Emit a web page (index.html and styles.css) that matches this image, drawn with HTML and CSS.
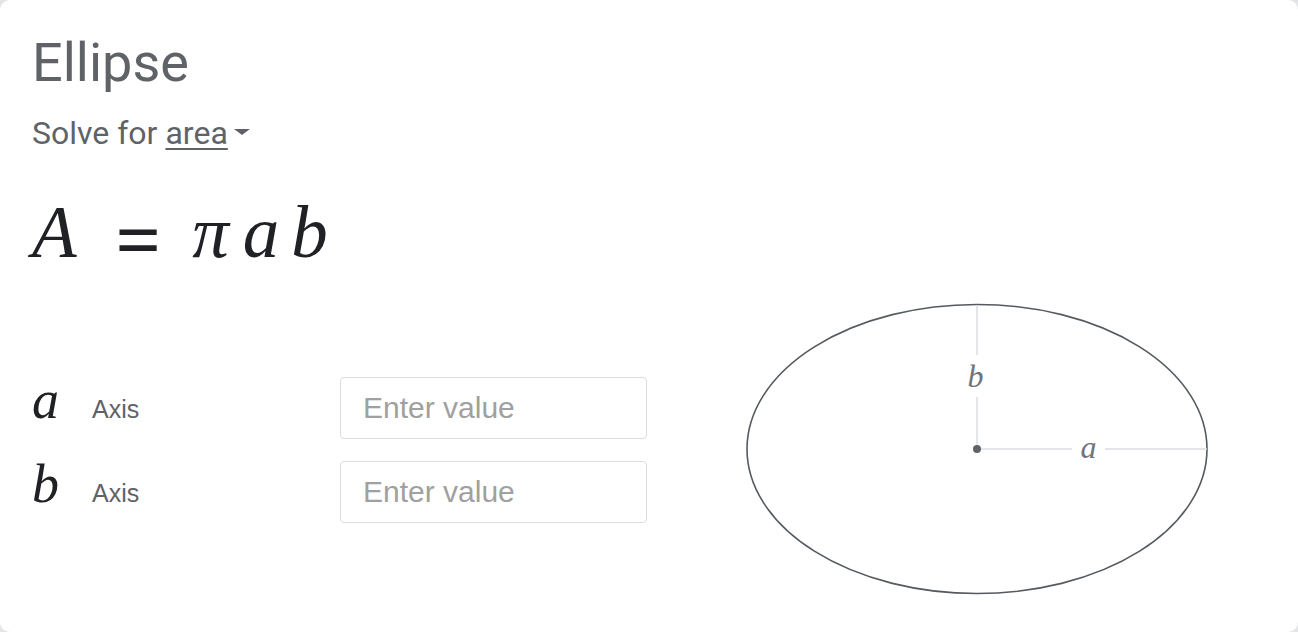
FILE: index.html
```html
<!DOCTYPE html>
<html lang="en">
<head>
<meta charset="utf-8">
<title>Ellipse</title>
<link rel="stylesheet" href="styles.css">
</head>
<body>
<div class="card">
  <h1 class="title">Ellipse</h1>
  <div class="solve">Solve for <span class="solve-target">area</span><span class="caret"></span></div>
  <div class="formula"><span class="f-A">A</span><span class="f-eq">=</span><span class="f-pi">π</span><span class="f-a">a</span><span class="f-b">b</span></div>
  <div class="bottom">
    <div class="form">
      <div class="row">
        <span class="var">a</span>
        <span class="label">Axis</span>
        <input class="field" type="text" placeholder="Enter value">
      </div>
      <div class="row">
        <span class="var">b</span>
        <span class="label">Axis</span>
        <input class="field" type="text" placeholder="Enter value">
      </div>
    </div>
    <svg class="diagram" width="466" height="294" viewBox="0 0 466 294">
      <ellipse cx="232" cy="146" rx="230" ry="144.5" fill="none" stroke="#555a5f" stroke-width="1.6"/>
      <line x1="232" y1="2" x2="232" y2="52" stroke="#dadce0" stroke-width="1.5"/>
      <line x1="232" y1="94" x2="232" y2="146" stroke="#dadce0" stroke-width="1.5"/>
      <line x1="232" y1="146" x2="327" y2="146" stroke="#dadce0" stroke-width="1.5"/>
      <line x1="360" y1="146" x2="462" y2="146" stroke="#dadce0" stroke-width="1.5"/>
      <circle cx="232" cy="146" r="4" fill="#5f6368"/>
      <text class="dlabel" x="230.5" y="84" text-anchor="middle">b</text>
      <text class="dlabel" x="343.5" y="155" text-anchor="middle">a</text>
    </svg>
  </div>
</div>
</body>
</html>
```
FILE: styles.css
```css
html, body {
  margin: 0;
  padding: 0;
  background: #e4e5e7;
}
body {
  width: 1298px;
  height: 632px;
  overflow: hidden;
}
.card {
  box-sizing: border-box;
  width: 1298px;
  height: 632px;
  background: #fff;
  border-radius: 10px;
  padding: 31px 32px 0 32px;
  font-family: Roboto, "Liberation Sans", Arial, sans-serif;
}
.title {
  margin: 0;
  font-size: 54px;
  line-height: 64px;
  font-weight: 400;
  color: #5f6368;
}
.solve {
  margin-top: 18px;
  font-size: 32px;
  line-height: 40px;
  color: #5f6368;
  display: flex;
  align-items: center;
}
.solve-target {
  margin-left: 8px;
  text-decoration: underline;
  text-decoration-thickness: 2px;
  text-underline-offset: 4px;
}
.caret {
  width: 0;
  height: 0;
  margin-left: 6px;
  margin-top: -3px;
  border-left: 8px solid transparent;
  border-right: 8px solid transparent;
  border-top: 6px solid #5f6368;
}
.formula {
  margin-top: 40px;
  height: 80px;
  white-space: nowrap;
  font-family: "Liberation Serif", "Times New Roman", serif;
  font-style: italic;
  font-size: 73px;
  line-height: 80px;
  color: #202124;
}
.formula span {
  display: inline-block;
  vertical-align: baseline;
}
.f-A { margin-right: 39px; }
.formula .f-eq {
  font-style: normal;
  font-weight: 700;
  font-size: 80px;
  line-height: 78px;
  margin-right: 31px;
  vertical-align: -10px;
}
.f-pi { margin-right: 14px; }
.f-a { margin-right: 12px; }
.bottom {
  margin-top: 30px;
  display: flex;
  align-items: flex-start;
}
.form {
  padding-top: 74px;
  display: flex;
  flex-direction: column;
  gap: 22px;
}
.row {
  height: 62px;
  display: flex;
  align-items: baseline;
}
.var {
  width: 60px;
  font-family: "Liberation Serif", "Times New Roman", serif;
  font-style: italic;
  font-size: 54px;
  line-height: 40px;
  color: #202124;
}
.label {
  width: 248px;
  font-family: "Liberation Sans", Arial, sans-serif;
  font-size: 25px;
  line-height: 28px;
  color: #5f6368;
}
.field {
  box-sizing: border-box;
  width: 307px;
  height: 62px;
  border: 1px solid #dadce0;
  border-radius: 4px;
  padding: 0 0 0 22px;
  font-family: "Liberation Sans", Arial, sans-serif;
  font-size: 30px;
  color: #202124;
  background: #fff;
  outline: none;
}
.field::placeholder {
  color: #a0a0a0;
}
.diagram {
  display: block;
  margin-left: 98px;
}
.dlabel {
  font-family: "Liberation Serif", "Times New Roman", serif;
  font-style: italic;
  font-size: 32px;
  fill: #70757a;
}
```
